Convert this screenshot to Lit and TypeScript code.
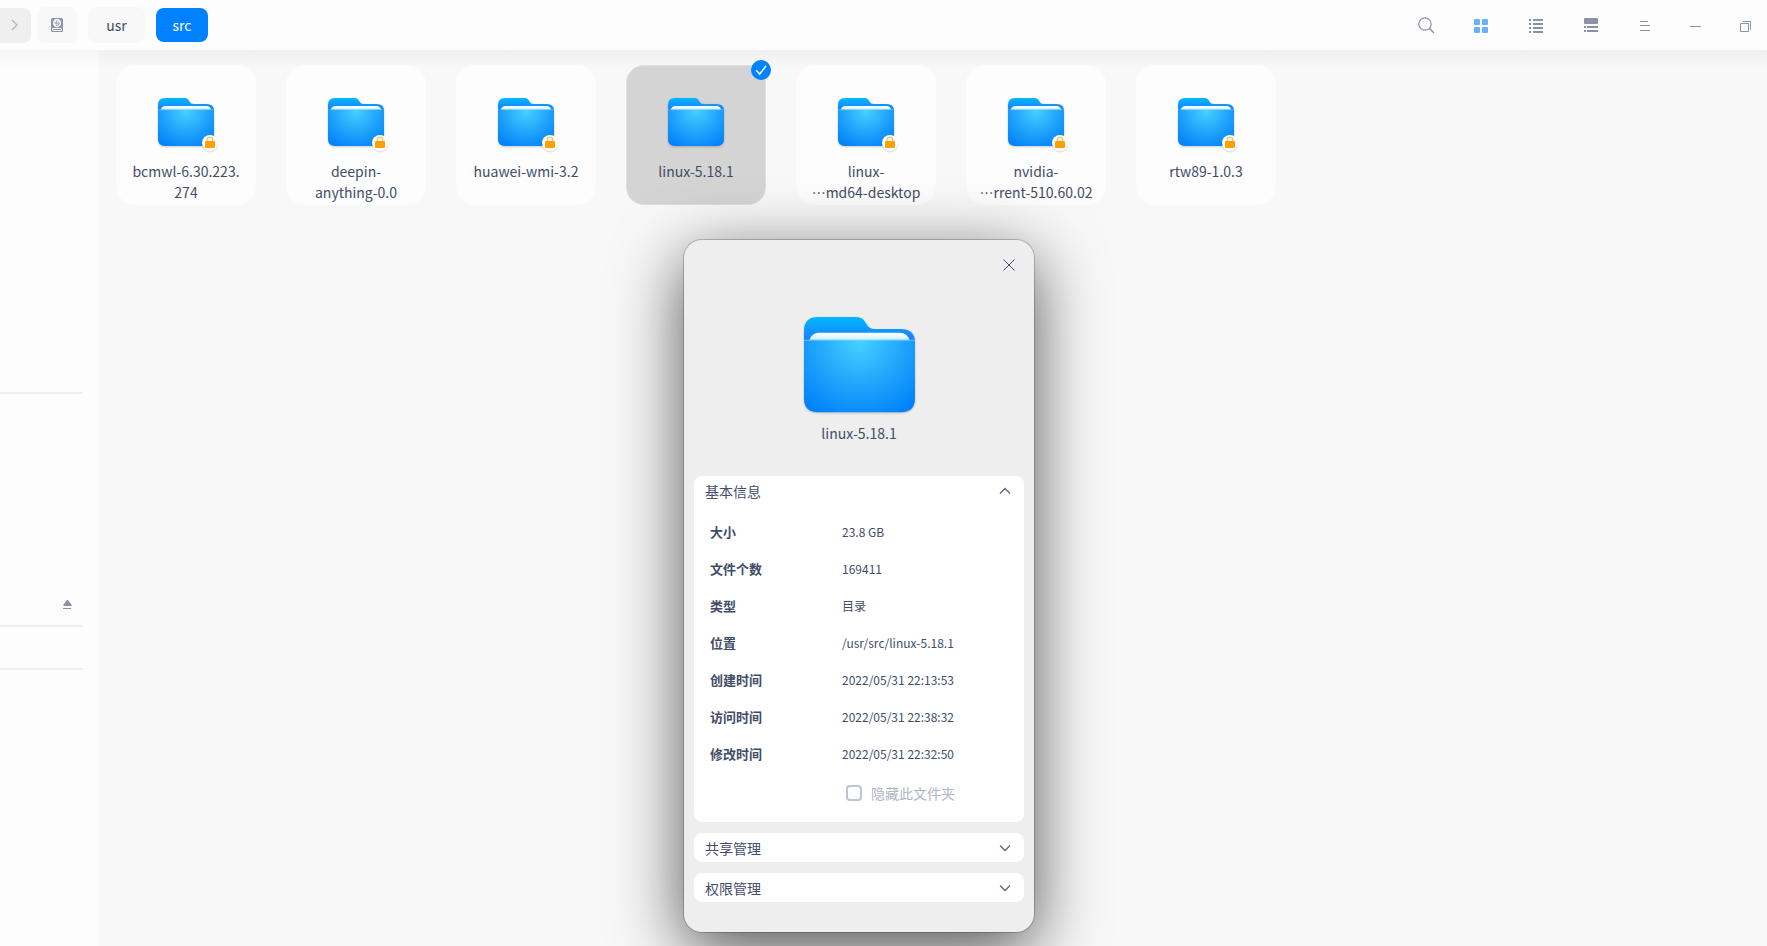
import { LitElement, html, css, svg, nothing } from "lit";
import { customElement, property, state } from "lit/decorators.js";

@customElement("folder-icon")
class FolderIcon extends LitElement {
  static styles = css`
    :host { display: block; }
    svg { display: block; width: 100%; overflow: visible; filter: drop-shadow(0 1px 1px rgba(0, 0, 0, 0.2)); }
  `;
  render() {
    return html`<svg viewBox="0 0 112 96" aria-hidden="true">
      <defs>
        <linearGradient id="back" x1="0" y1="0" x2="0" y2="1">
          <stop offset="0" stop-color="#00b8ff" />
          <stop offset="1" stop-color="#1f78ff" />
        </linearGradient>
        <linearGradient id="paper" x1="0" y1="0" x2="0" y2="1">
          <stop offset="0" stop-color="#ffffff" />
          <stop offset="1" stop-color="#c9efff" />
        </linearGradient>
        <radialGradient id="front" gradientUnits="userSpaceOnUse" cx="56" cy="25" r="84">
          <stop offset="0" stop-color="#45d1ff" />
          <stop offset="0.5" stop-color="#22a7fb" />
          <stop offset="1" stop-color="#0080fa" />
        </radialGradient>
      </defs>
      <path fill="url(#back)" d="M0 26V14Q0 0 14 0H53C59 0 61 4 63 7C65 10.500 67 12 72 12H98Q111 12 112 24V26Z" />
      <path fill="url(#paper)" d="M5 24Q8 16 15 16H97Q104 16 107 24Z" />
      <path fill="url(#front)" d="M0 23H112V82Q112 96 98 96H14Q0 96 0 82Z" />
      <path fill="none" stroke="#8fdcff" stroke-opacity="0.6" d="M0 23.500H112" />
    </svg>`;
  }
}

@customElement("file-card")
class FileCard extends LitElement {
  @property({ attribute: false }) lines: string[] = [];
  @property({ type: Boolean }) selected = false;
  static styles = css`
    :host { display: block; }
    .card {
      position: relative; box-sizing: border-box; width: 140px; height: 140px; padding: 32px 0 0; border: 1px solid #fcfcfc;
      border-radius: 18px; background: #fdfdfd; color: #414d68; font: inherit; display: flex; flex-direction: column;
      align-items: center; gap: 15px; text-align: center;
    }
    .selected { background: #d4d4d4; border-color: #dedede; }
    .picture { position: relative; width: 56px; }
    .lock { position: absolute; right: -6px; bottom: -7px; width: 20px; height: 20px; }
    .check { position: absolute; right: -6px; top: -6px; width: 20px; height: 20px; }
    .name { display: block; line-height: 21px; white-space: nowrap; }
    .line { display: block; }
  `;
  render() {
    return html`<button class="card ${this.selected ? "selected" : ""}" aria-pressed=${this.selected}>
      <span class="picture">
        <folder-icon></folder-icon>
        ${this.selected
          ? nothing
          : html`<svg class="lock" viewBox="0 0 20 20" aria-hidden="true">
              <circle cx="10" cy="11" r="8.500" fill="#000" opacity="0.1" />
              <circle cx="10" cy="10" r="8" fill="#fff" />
              <path d="M7.300 9V6.800a2.700 2.700 0 0 1 5.400 0V9" fill="none" stroke="#ffbf57" stroke-width="1.300" />
              <rect x="5" y="8" width="10" height="7" rx="1" fill="#ffa000" />
            </svg>`}
      </span>
      <span class="name" lang="zh-CN">${this.lines.map((l) => html`<span class="line">${l}</span>`)}</span>
      ${this.selected
        ? html`<svg class="check" viewBox="0 0 20 20" aria-hidden="true">
            <circle cx="10" cy="10" r="10" fill="#0081ff" />
            <path d="M5.200 10.200L8.700 14L15 5.800" fill="none" stroke="#fff" stroke-width="1.500" />
          </svg>`
        : nothing}
    </button>`;
  }
}

@customElement("info-section")
class InfoSection extends LitElement {
  @property() heading = "";
  @property({ type: Boolean }) open = false;
  static styles = css`
    :host { display: block; background: #fff; border-radius: 8px; }
    .head {
      box-sizing: border-box; width: 100%; height: 29px; padding: 0 13px 0 11px; border: 0; background: none; color: #414d68;
      font: inherit; display: flex; align-items: center; justify-content: space-between;
    }
    svg { width: 12px; height: 12px; }
  `;
  render() {
    return html`<button class="head" aria-expanded=${this.open} @click=${() => (this.open = !this.open)}>
        <span>${this.heading}</span>
        <svg viewBox="0 0 12 12" fill="none" stroke="#5a6684" stroke-width="1.300" aria-hidden="true">
          <path d=${this.open ? "M1 8.500L6 3.500L11 8.500" : "M1 3.500L6 8.500L11 3.500"} />
        </svg>
      </button>
      ${this.open ? html`<slot></slot>` : nothing}`;
  }
}

const ICONS = {
  search: svg`<circle cx="7" cy="7" r="6.200" fill="none" stroke="#8a92a6" stroke-width="1.200"/><path d="M11.300 11.300L16 16" stroke="#8a92a6" stroke-width="1.500"/>`,
  grid: svg`<g fill="#68b2fd"><rect x="1" y="2" width="6" height="6" rx="1"/><rect x="9" y="2" width="6" height="6" rx="1"/><rect x="1" y="10" width="6" height="6" rx="1"/><rect x="9" y="10" width="6" height="6" rx="1"/></g>`,
  list: svg`<path fill="#8a92a6" d="M1 2h2v2H1zM5 2h10v2H5zM1 6h2v2H1zM5 6h10v2H5zM1 10h2v2H1zM5 10h10v2H5zM1 14h2v2H1zM5 14h10v2H5z"/>`,
  detail: svg`<rect x="1" y="1" width="14" height="6" rx="1" fill="#8a92a6"/><path fill="#8a92a6" d="M1 9h2v2H1zM4 9h11v2H4zM1 13h2v2H1zM4 13h11v2H4z"/>`,
  menu: svg`<path fill="#8a92a6" d="M0 2h8v1H0zM0 6h10v1H0zM0 11h10v1H0z"/>`,
  minimize: svg`<path fill="#8a92a6" d="M0 7h11v1H0z"/>`,
  restore: svg`<path fill="none" stroke="#8a92a6" d="M0.500 4.500h8v8h-8zM2.500 2.500h8v8"/>`,
};

@customElement("app-root")
class AppRoot extends LitElement {
  @state() private dialogOpen = true;

  private files = [
    { lines: ["bcmwl-6.30.223.", "274"] },
    { lines: ["deepin-", "anything-0.0"] },
    { lines: ["huawei-wmi-3.2"] },
    { lines: ["linux-5.18.1"], selected: true },
    { lines: ["linux-", "…md64-desktop"] },
    { lines: ["nvidia-", "…rrent-510.60.02"] },
    { lines: ["rtw89-1.0.3"] },
  ];

  private info = [
    ["大小", "23.8 GB"],
    ["文件个数", "169411"],
    ["类型", "目录"],
    ["位置", "/usr/src/linux-5.18.1"],
    ["创建时间", "2022/05/31 22:13:53"],
    ["访问时间", "2022/05/31 22:38:32"],
    ["修改时间", "2022/05/31 22:32:50"],
  ];

  static styles = css`
    :host {
      position: relative; display: flex; flex-direction: column; height: 100vh; overflow: hidden; background: #f8f8f8;
      color: #414d68; font: 14px/20px "Noto Sans CJK SC", sans-serif;
    }
    button { font: inherit; color: inherit; border: 0; padding: 0; margin: 0; background: none; }
    .bar { display: flex; align-items: center; justify-content: space-between; height: 50px; background: #fdfdfd; }
    .path { display: flex; align-items: center; }
    .forward { width: 31px; height: 35px; border-radius: 0 8px 8px 0; background: #efefef; display: flex; align-items: center; padding-left: 8px; }
    .crumb { height: 36px; border-radius: 8px; background: #f8f8f8; display: flex; align-items: center; justify-content: center; }
    .disk { width: 40px; margin-left: 6px; }
    .dir { width: 57px; margin-left: 11px; }
    .current { width: 52px; height: 34px; margin-left: 11px; background: #0081ff; color: #fff; }
    .tools { display: flex; align-items: center; gap: 38px; padding-right: 15px; }
    .views { display: flex; align-items: center; gap: 39px; padding-right: 3px; }
    .tool { display: block; }
    .tool svg { display: block; overflow: visible; }
    .body { flex: 1; display: flex; min-height: 0; }
    .side { width: 99px; background: linear-gradient(#f4f4f4, #fdfdfd 18px); }
    .group { box-sizing: border-box; width: 83px; border-bottom: 2px solid #efefef; display: flex; justify-content: flex-end; align-items: flex-end; }
    .places { height: 344px; }
    .disks { height: 233px; padding: 0 11px 16px 0; }
    .network { height: 43px; }
    .files { flex: 1; display: flex; flex-wrap: wrap; align-content: flex-start; gap: 30px; padding: 15px 17px; background: linear-gradient(#f0f0f0, #f8f8f8 18px); }
    .dialog {
      position: absolute; left: 684px; top: 240px; box-sizing: border-box; width: 350px; padding: 0 10px 30px; border-radius: 18px; background: #eeeeee;
      box-shadow: 0 0 0 1px rgba(0, 0, 0, 0.2), 0 18px 68px rgba(0, 0, 0, 0.68);
      display: flex; flex-direction: column; gap: 11px;
    }
    .top { display: flex; justify-content: flex-end; padding: 19px 9px 0; height: 47px; }
    .close, .close svg { display: block; width: 12px; height: 12px; }
    .hero { display: flex; flex-direction: column; align-items: center; gap: 11px; margin-bottom: 22px; }
    .hero-name { font-size: 15px; }
    .big { width: 111px; }
    .info { margin: 0; padding: 8px 16px 0; display: grid; grid-template-columns: 132px 1fr; grid-auto-rows: 37px; align-items: center; font-size: 12px; }
    dt { font-size: 13px; font-weight: 700; }
    dd { margin: 0; }
    .hide { box-sizing: border-box; display: flex; align-items: center; gap: 9px; height: 50px; padding: 0 0 9px 152px; color: #b0b5c3; }
    .hide input { appearance: none; box-sizing: border-box; width: 16px; height: 16px; margin: 0; border: 2px solid #c0c4d0; border-radius: 4px; background: #fff; }
  `;

  private tool(name: keyof typeof ICONS, label: string, size: number) {
    return html`<button class="tool" aria-label=${label}>
      <svg width=${size} height=${size} viewBox="0 0 ${size} ${size}" aria-hidden="true">${ICONS[name]}</svg>
    </button>`;
  }

  private renderDialog() {
    return html`<section class="dialog" role="dialog" aria-label="linux-5.18.1">
      <div class="top">
        <button class="close" aria-label="关闭" @click=${() => (this.dialogOpen = false)}>
          <svg viewBox="0 0 12 12" stroke="#414d68" aria-hidden="true"><path d="M0.500 0.500L11.500 11.500M11.500 0.500L0.500 11.500" /></svg>
        </button>
      </div>
      <div class="hero">
        <folder-icon class="big"></folder-icon>
        <span>linux-5.18.1</span>
      </div>
      <info-section heading="基本信息" open>
        <dl class="info">${this.info.map(([k, v]) => html`<dt>${k}</dt><dd>${v}</dd>`)}</dl>
        <label class="hide"><input type="checkbox" disabled />隐藏此文件夹</label>
      </info-section>
      <info-section heading="共享管理"></info-section>
      <info-section heading="权限管理"></info-section>
    </section>`;
  }

  render() {
    return html`
      <header class="bar">
        <nav class="path">
          <button class="forward" aria-label="前进">
            <svg width="12" height="12" viewBox="0 0 12 12" fill="none" stroke="#adb2bf" stroke-width="1.200"><path d="M4 1L9 6L4 11" /></svg>
          </button>
          <button class="crumb disk" aria-label="系统盘">
            <svg width="12" height="14" viewBox="0 0 12 14" aria-hidden="true">
              <rect width="12" height="14" rx="1.500" fill="#8a92a6" />
              <circle cx="6" cy="5" r="4.200" fill="#f2f3f5" />
              <path d="M3.500 3.500Q4 6.500 6.500 6Q8.500 5 7 3.500M6 2.500Q4.500 4 6 5.500M8.500 5Q8 8 5 7.500" fill="none" stroke="#8a92a6" stroke-width="0.800" />
              <rect x="1.500" y="10.500" width="9" height="2" rx="0.500" fill="none" stroke="#fff" />
            </svg>
          </button>
          <button class="crumb dir">usr</button>
          <button class="crumb current">src</button>
        </nav>
        <div class="tools">
          <div class="views">
            ${this.tool("search", "搜索", 16)} ${this.tool("grid", "图标视图", 16)}
            ${this.tool("list", "列表视图", 16)} ${this.tool("detail", "详细信息", 16)}
          </div>
          ${this.tool("menu", "菜单", 12)} ${this.tool("minimize", "最小化", 12)} ${this.tool("restore", "还原", 12)}
        </div>
      </header>
      <div class="body">
        <aside class="side">
          <div class="group places"></div>
          <div class="group disks">
            <button class="tool" aria-label="弹出">
              <svg width="9" height="9" viewBox="0 0 9 9" fill="#8a92a6" aria-hidden="true"><path d="M4 0h1l3.500 4.500V6H0.500V4.500zM0 8h8v1H0z" /></svg>
            </button>
          </div>
          <div class="group network"></div>
        </aside>
        <main class="files">
          ${this.files.map((f) => html`<file-card .lines=${f.lines} ?selected=${!!f.selected}></file-card>`)}
        </main>
      </div>
      ${this.dialogOpen ? this.renderDialog() : nothing}
    `;
  }
}
